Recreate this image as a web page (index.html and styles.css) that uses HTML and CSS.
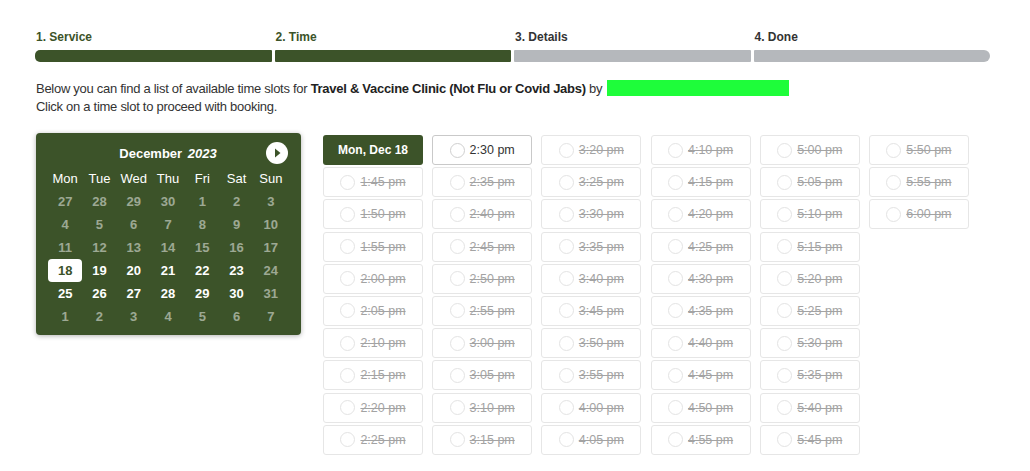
FILE: index.html
```html
<!DOCTYPE html>
<html lang="en">
<head>
  <meta charset="UTF-8" />
  <meta name="viewport" content="width=device-width, initial-scale=1.0"/>
  <title>Book an appointment</title>
  <link rel="stylesheet" href="styles.css">
</head>
<body>
  <div class="booking">
    <div class="steps">
      <div class="step done"><span>1. Service</span><div class="bar"></div></div>
      <div class="step done"><span>2. Time</span><div class="bar"></div></div>
      <div class="step"><span>3. Details</span><div class="bar"></div></div>
      <div class="step"><span>4. Done</span><div class="bar"></div></div>
    </div>

    <p class="intro">
      Below you can find a list of available time slots for <b>Travel &amp; Vaccine Clinic (Not Flu or Covid Jabs)</b> by <span class="staff"></span><br>
      Click on a time slot to proceed with booking.
    </p>

    <div class="picker">
      <div class="calendar">
        <div class="cal-head">
          <span></span>
          <div class="cal-title"><b>December</b> <i>2023</i></div>
          <button class="cal-next" aria-label="Next month">
            <svg width="22" height="22" viewBox="0 0 22 22"><circle cx="11" cy="11" r="11" fill="#fff"/><path d="M9 6.5 L14.5 11 L9 15.5 Z" fill="#3c5329"/></svg>
          </button>
        </div>
        <div class="cal-grid">
          <span class="wd">Mon</span><span class="wd">Tue</span><span class="wd">Wed</span><span class="wd">Thu</span><span class="wd">Fri</span><span class="wd">Sat</span><span class="wd">Sun</span>
          <span class="off">27</span><span class="off">28</span><span class="off">29</span><span class="off">30</span><span class="off">1</span><span class="off">2</span><span class="off">3</span>
          <span class="off">4</span><span class="off">5</span><span class="off">6</span><span class="off">7</span><span class="off">8</span><span class="off">9</span><span class="off">10</span>
          <span class="off">11</span><span class="off">12</span><span class="off">13</span><span class="off">14</span><span class="off">15</span><span class="off">16</span><span class="off">17</span>
          <span class="sel">18</span><span>19</span><span>20</span><span>21</span><span>22</span><span>23</span><span class="off">24</span>
          <span>25</span><span>26</span><span>27</span><span>28</span><span>29</span><span>30</span><span class="off">31</span>
          <span class="off">1</span><span class="off">2</span><span class="off">3</span><span class="off">4</span><span class="off">5</span><span class="off">6</span><span class="off">7</span>
        </div>
      </div>

      <div class="slots">
        <div class="day">Mon, Dec 18</div>
        <button class="slot" disabled><i></i>1:45 pm</button>
        <button class="slot" disabled><i></i>1:50 pm</button>
        <button class="slot" disabled><i></i>1:55 pm</button>
        <button class="slot" disabled><i></i>2:00 pm</button>
        <button class="slot" disabled><i></i>2:05 pm</button>
        <button class="slot" disabled><i></i>2:10 pm</button>
        <button class="slot" disabled><i></i>2:15 pm</button>
        <button class="slot" disabled><i></i>2:20 pm</button>
        <button class="slot" disabled><i></i>2:25 pm</button>
        <button class="slot"><i></i>2:30 pm</button>
        <button class="slot" disabled><i></i>2:35 pm</button>
        <button class="slot" disabled><i></i>2:40 pm</button>
        <button class="slot" disabled><i></i>2:45 pm</button>
        <button class="slot" disabled><i></i>2:50 pm</button>
        <button class="slot" disabled><i></i>2:55 pm</button>
        <button class="slot" disabled><i></i>3:00 pm</button>
        <button class="slot" disabled><i></i>3:05 pm</button>
        <button class="slot" disabled><i></i>3:10 pm</button>
        <button class="slot" disabled><i></i>3:15 pm</button>
        <button class="slot" disabled><i></i>3:20 pm</button>
        <button class="slot" disabled><i></i>3:25 pm</button>
        <button class="slot" disabled><i></i>3:30 pm</button>
        <button class="slot" disabled><i></i>3:35 pm</button>
        <button class="slot" disabled><i></i>3:40 pm</button>
        <button class="slot" disabled><i></i>3:45 pm</button>
        <button class="slot" disabled><i></i>3:50 pm</button>
        <button class="slot" disabled><i></i>3:55 pm</button>
        <button class="slot" disabled><i></i>4:00 pm</button>
        <button class="slot" disabled><i></i>4:05 pm</button>
        <button class="slot" disabled><i></i>4:10 pm</button>
        <button class="slot" disabled><i></i>4:15 pm</button>
        <button class="slot" disabled><i></i>4:20 pm</button>
        <button class="slot" disabled><i></i>4:25 pm</button>
        <button class="slot" disabled><i></i>4:30 pm</button>
        <button class="slot" disabled><i></i>4:35 pm</button>
        <button class="slot" disabled><i></i>4:40 pm</button>
        <button class="slot" disabled><i></i>4:45 pm</button>
        <button class="slot" disabled><i></i>4:50 pm</button>
        <button class="slot" disabled><i></i>4:55 pm</button>
        <button class="slot" disabled><i></i>5:00 pm</button>
        <button class="slot" disabled><i></i>5:05 pm</button>
        <button class="slot" disabled><i></i>5:10 pm</button>
        <button class="slot" disabled><i></i>5:15 pm</button>
        <button class="slot" disabled><i></i>5:20 pm</button>
        <button class="slot" disabled><i></i>5:25 pm</button>
        <button class="slot" disabled><i></i>5:30 pm</button>
        <button class="slot" disabled><i></i>5:35 pm</button>
        <button class="slot" disabled><i></i>5:40 pm</button>
        <button class="slot" disabled><i></i>5:45 pm</button>
        <button class="slot" disabled><i></i>5:50 pm</button>
        <button class="slot" disabled><i></i>5:55 pm</button>
        <button class="slot" disabled><i></i>6:00 pm</button>
      </div>
    </div>
  </div>
</body>
</html>
```

FILE: styles.css
```css
body {
  margin: 0;
  font-family: 'Liberation Sans', Arial, sans-serif;
  color: #222;
  background: #fff;
}

.booking {
  padding: 30px 40px 0 35px;
}

/* progress steps */
.steps {
  display: flex;
  gap: 3px;
}

.step {
  flex: 1;
}

.step span {
  display: block;
  padding-left: 1px;
  font-size: 12px;
  font-weight: bold;
  line-height: 14px;
  color: #333;
}

.step .bar {
  margin-top: 6px;
  height: 12px;
  background: #b5b8bc;
  border-radius: 1px;
}

.step.done span {
  color: #3c5329;
}

.step.done .bar {
  background: #3c5329;
}

.step:first-child .bar {
  border-radius: 5px 1px 1px 5px;
}

.step:last-child .bar {
  border-radius: 1px 6px 6px 1px;
}

.intro {
  margin: 18px 0 0 1px;
  font-size: 13px;
  line-height: 18px;
  letter-spacing: -0.28px;
  color: #333;
}

.intro b {
  color: #222;
}

.staff {
  display: inline-block;
  width: 182px;
  height: 16px;
  margin-left: 1px;
  background: #1efd3a;
  vertical-align: -3px;
}

/* calendar + slots */
.picker {
  display: flex;
  align-items: flex-start;
  gap: 22px;
  margin-top: 17px;
}

.calendar {
  width: 240px;
  padding: 6px 13px 7px 12px;
  margin-left: 1px;
  background: #3c5329;
  border-radius: 4px;
  box-shadow: 0 1px 5px rgba(0, 0, 0, 0.3);
  color: #fff;
}

.cal-head {
  display: grid;
  grid-template-columns: 22px 1fr 22px;
  align-items: center;
  height: 28px;
}

.cal-title {
  text-align: center;
  font-size: 13px;
  font-weight: bold;
}

.cal-title i {
  margin-left: 2px;
}

.cal-next {
  padding: 0;
  border: none;
  background: none;
  width: 22px;
  height: 22px;
  cursor: pointer;
}

.cal-next svg {
  display: block;
}

.cal-grid {
  display: grid;
  grid-template-columns: repeat(7, 1fr);
  grid-auto-rows: 23px;
  font-size: 13px;
  font-weight: bold;
  text-align: center;
}

.cal-grid span {
  line-height: 23px;
}

.cal-grid .wd {
  font-weight: normal;
}

.cal-grid .off {
  color: rgba(255, 255, 255, 0.5);
}

.cal-grid .sel {
  background: #fff;
  color: #3c5329;
  border-radius: 4px;
}

.slots {
  display: grid;
  grid-auto-flow: column;
  grid-template-rows: repeat(10, 30px);
  grid-template-columns: repeat(6, 100px);
  row-gap: 2.2px;
  column-gap: 9.2px;
  margin-top: 2px;
}

.day {
  display: flex;
  align-items: center;
  justify-content: center;
  background: #3c5329;
  color: #fff;
  border-radius: 3px;
  font-size: 12px;
  font-weight: bold;
}

.slot {
  display: flex;
  align-items: center;
  justify-content: center;
  gap: 5px;
  padding: 0;
  background: #fff;
  border: 1px solid #c9c9c9;
  border-radius: 3px;
  font-family: inherit;
  font-size: 12.5px;
  color: #333;
  cursor: pointer;
}

.slot i {
  width: 13px;
  height: 13px;
  border: 1px solid #cfcfcf;
  border-radius: 50%;
}

.slot:disabled {
  border-color: #e6e6e6;
  color: #a3a3a3;
  text-decoration: line-through;
  cursor: default;
}

.slot:disabled i {
  border-color: #e3e3e3;
}
```
